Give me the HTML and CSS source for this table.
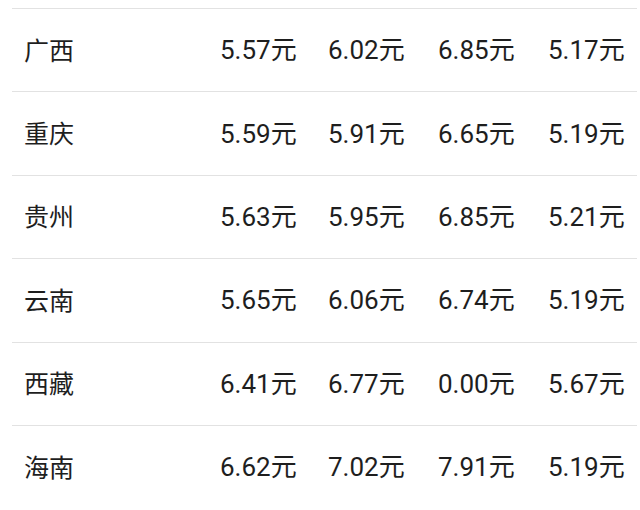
FILE: index.html
```html
<!DOCTYPE html>
<html lang="zh-CN">
<head>
<meta charset="utf-8">
<link rel="stylesheet" href="styles.css">
</head>
<body>
<div class="table">
  <div class="row"><div class="name">广西</div><div class="num">5.57元</div><div class="num">6.02元</div><div class="num">6.85元</div><div class="num">5.17元</div></div>
  <div class="row"><div class="name">重庆</div><div class="num">5.59元</div><div class="num">5.91元</div><div class="num">6.65元</div><div class="num">5.19元</div></div>
  <div class="row"><div class="name">贵州</div><div class="num">5.63元</div><div class="num">5.95元</div><div class="num">6.85元</div><div class="num">5.21元</div></div>
  <div class="row"><div class="name">云南</div><div class="num">5.65元</div><div class="num">6.06元</div><div class="num">6.74元</div><div class="num">5.19元</div></div>
  <div class="row"><div class="name">西藏</div><div class="num">6.41元</div><div class="num">6.77元</div><div class="num">0.00元</div><div class="num">5.67元</div></div>
  <div class="row"><div class="name">海南</div><div class="num">6.62元</div><div class="num">7.02元</div><div class="num">7.91元</div><div class="num">5.19元</div></div>
</div>
</body>
</html>
```

FILE: styles.css
```css
html, body {
  margin: 0;
  padding: 0;
  background: #ffffff;
}
body {
  width: 640px;
  height: 510px;
  overflow: hidden;
  padding-top: 8px;
  box-sizing: border-box;
  color: #1e1e1e;
  font-family: Roboto, "Noto Sans CJK SC", sans-serif;
}
.table {
  margin-left: 12px;
  width: 625px;
}
.row {
  display: grid;
  grid-template-columns: 196px 108px 110px 110px auto;
  align-items: center;
  height: 83.4px;
  box-sizing: border-box;
  border-top: 1.5px solid #e2e2e2;
  padding-left: 12px;
}
.name {
  font-size: 25px;
  font-family: "Noto Sans CJK SC", sans-serif;
  line-height: 1;
  padding-bottom: 2px;
}
.num {
  font-size: 26px;
  line-height: 1;
  white-space: nowrap;
}
```
